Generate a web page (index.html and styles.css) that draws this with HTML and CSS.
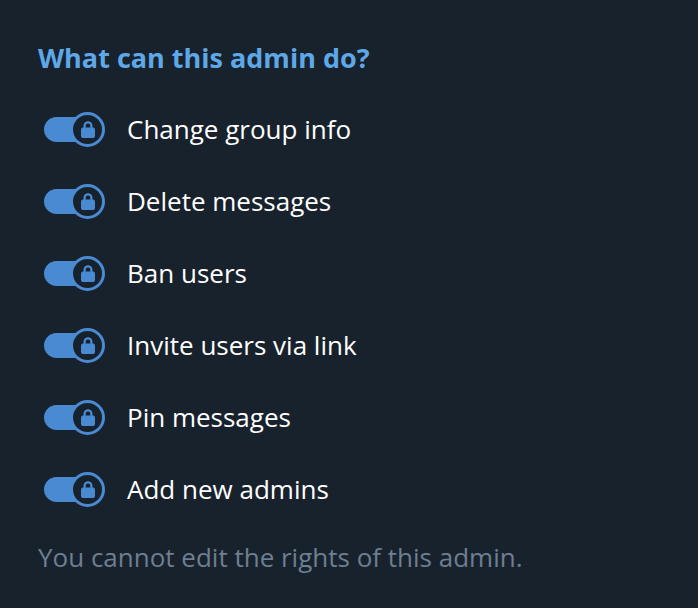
FILE: index.html
```html
<!DOCTYPE html>
<html>
<head>
<meta charset="utf-8">
<link rel="stylesheet" href="styles.css">
</head>
<body>
<div class="panel">
  <h2 class="title">What can this admin do?</h2>
  <ul class="rights">
    <li class="right"><span class="toggle"><span class="track"></span><span class="knob"><svg viewBox="0 0 20 20" class="lock"><path d="M6.6 9V6.8a3.4 3.4 0 0 1 6.8 0V9" fill="none" stroke="currentColor" stroke-width="2.2"/><rect x="3" y="8.6" width="14" height="10.4" rx="2" fill="currentColor"/></svg></span></span><span class="label">Change group info</span></li>
    <li class="right"><span class="toggle"><span class="track"></span><span class="knob"><svg viewBox="0 0 20 20" class="lock"><path d="M6.6 9V6.8a3.4 3.4 0 0 1 6.8 0V9" fill="none" stroke="currentColor" stroke-width="2.2"/><rect x="3" y="8.6" width="14" height="10.4" rx="2" fill="currentColor"/></svg></span></span><span class="label">Delete messages</span></li>
    <li class="right"><span class="toggle"><span class="track"></span><span class="knob"><svg viewBox="0 0 20 20" class="lock"><path d="M6.6 9V6.8a3.4 3.4 0 0 1 6.8 0V9" fill="none" stroke="currentColor" stroke-width="2.2"/><rect x="3" y="8.6" width="14" height="10.4" rx="2" fill="currentColor"/></svg></span></span><span class="label">Ban users</span></li>
    <li class="right"><span class="toggle"><span class="track"></span><span class="knob"><svg viewBox="0 0 20 20" class="lock"><path d="M6.6 9V6.8a3.4 3.4 0 0 1 6.8 0V9" fill="none" stroke="currentColor" stroke-width="2.2"/><rect x="3" y="8.6" width="14" height="10.4" rx="2" fill="currentColor"/></svg></span></span><span class="label">Invite users via link</span></li>
    <li class="right"><span class="toggle"><span class="track"></span><span class="knob"><svg viewBox="0 0 20 20" class="lock"><path d="M6.6 9V6.8a3.4 3.4 0 0 1 6.8 0V9" fill="none" stroke="currentColor" stroke-width="2.2"/><rect x="3" y="8.6" width="14" height="10.4" rx="2" fill="currentColor"/></svg></span></span><span class="label">Pin messages</span></li>
    <li class="right"><span class="toggle"><span class="track"></span><span class="knob"><svg viewBox="0 0 20 20" class="lock"><path d="M6.6 9V6.8a3.4 3.4 0 0 1 6.8 0V9" fill="none" stroke="currentColor" stroke-width="2.2"/><rect x="3" y="8.6" width="14" height="10.4" rx="2" fill="currentColor"/></svg></span></span><span class="label">Add new admins</span></li>
  </ul>
  <p class="note">You cannot edit the rights of this admin.</p>
</div>
</body>
</html>
```
FILE: styles.css
```css
html, body {
  margin: 0;
  padding: 0;
  background: #18222d;
  height: 100%;
}
.panel {
  padding: 42px 0 0 38px;
  font-family: "Open Sans", "Liberation Sans", sans-serif;
}
.title {
  margin: 0;
  font-size: 27px;
  line-height: 32px;
  font-weight: 700;
  color: #5fa8e8;
}
.rights {
  list-style: none;
  margin: 19px 0 0 0;
  padding: 0;
}
.right {
  height: 72px;
  display: flex;
  align-items: center;
  padding-left: 6px;
}
.toggle {
  position: relative;
  width: 61px;
  height: 35px;
  flex: none;
  display: flex;
  align-items: center;
}
.track {
  width: 46px;
  height: 25px;
  border-radius: 13px;
  background: #4a8ad3;
}
.knob {
  position: absolute;
  right: 0;
  top: 0;
  width: 29px;
  height: 29px;
  border: 3px solid #4a8ad3;
  border-radius: 50%;
  background: #18222d;
  display: flex;
  align-items: center;
  justify-content: center;
  color: #4a8ad3;
}
.lock {
  width: 20px;
  height: 20px;
}
.label {
  margin-left: 22px;
  padding-bottom: 1px;
  font-size: 26px;
  line-height: 32px;
  color: #ffffff;
}
.note {
  margin: 16px 0 0 0;
  font-size: 26px;
  line-height: 32px;
  color: #6d7f90;
}
```
